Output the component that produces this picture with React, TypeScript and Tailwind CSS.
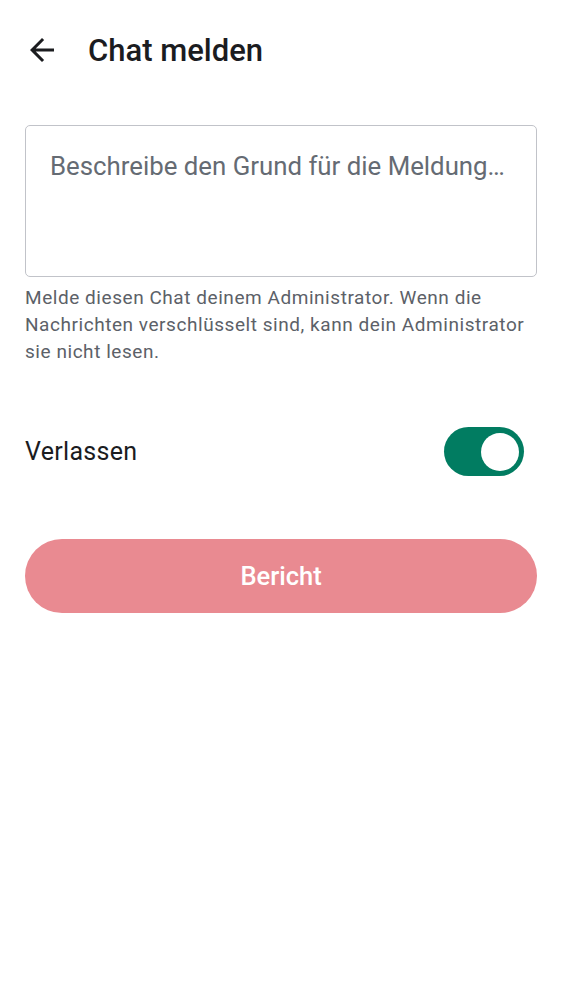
import React, { useState } from "react";

export default function App() {
    const [leave, setLeave] = useState(true);
    const [reason, setReason] = useState("");

    return (
        <div className="w-[562px] h-[1000px] bg-white font-['Roboto',sans-serif] text-[#1b1c1f]">
            {/* top bar */}
            <div className="flex items-center h-[100px] pl-[24px]">
                <button className="w-[36px] h-[36px] flex items-center justify-center">
                    <svg viewBox="0 0 24 24" className="w-[36px] h-[36px]" fill="#1b1c1f">
                        <path d="M20 11H7.83l5.59-5.59L12 4l-8 8 8 8 1.41-1.41L7.83 13H20v-2z" />
                    </svg>
                </button>
                <h1 className="ml-[28px] text-[31px] font-medium leading-none">Chat melden</h1>
            </div>

            <div className="px-[25px] pt-[25px]">
                <textarea
                    value={reason}
                    onChange={(e) => setReason(e.target.value)}
                    placeholder="Beschreibe den Grund für die Meldung…"
                    className="block w-full h-[152px] resize-none rounded-[5px] border-[1.5px] border-[#c1c3c9] px-[24px] py-[24px] text-[25.8px] leading-[32px] outline-none placeholder:text-[#656b73]"
                />
                <p className="mt-[7px] text-[19px] leading-[27px] tracking-[0.55px] text-[#5c6168]">
                    Melde diesen Chat deinem Administrator. Wenn die Nachrichten verschlüsselt sind, kann dein Administrator sie nicht lesen.
                </p>

                <div className="flex items-center justify-between mt-[62px] pr-[13px]">
                    <span className="text-[25px] tracking-[0.3px]">Verlassen</span>
                    <button
                        onClick={() => setLeave(!leave)}
                        className={`w-[80px] h-[49px] rounded-full flex items-center px-[5px] ${leave ? "bg-[#017c61] justify-end" : "bg-[#dfe3e7] justify-start"}`}
                    >
                        <span className="w-[38px] h-[38px] rounded-full bg-white block" />
                    </button>
                </div>

                <button className="mt-[63px] w-full h-[74px] rounded-full bg-[#e98a91] text-white text-[25.5px] font-medium">
                    Bericht
                </button>
            </div>
        </div>
    );
}
